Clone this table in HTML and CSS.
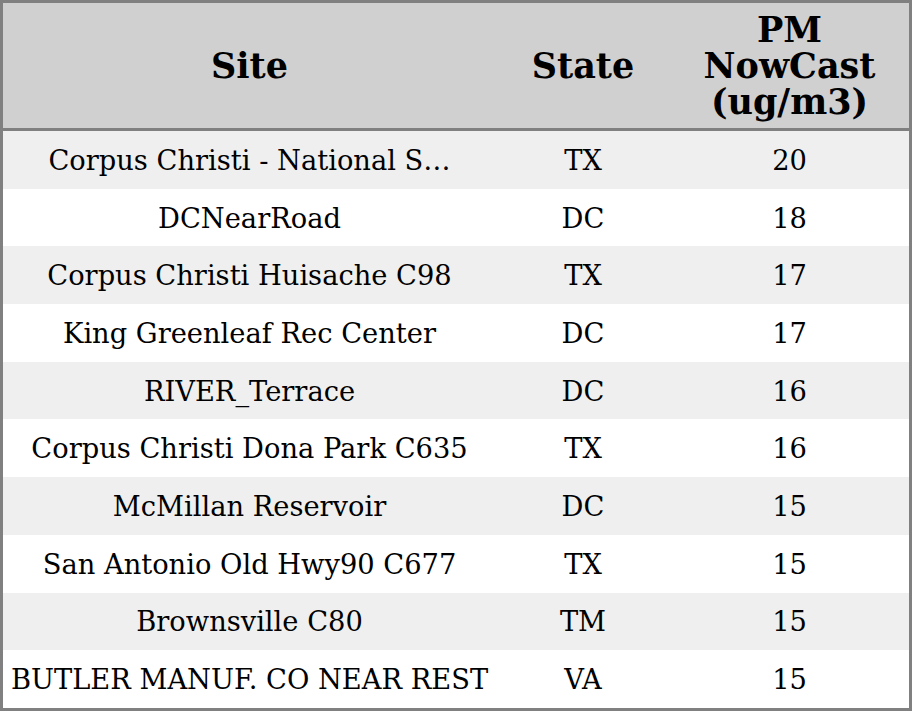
FILE: index.html
```html
<!DOCTYPE html>
<html>
<head>
<meta charset="utf-8">
<link rel="stylesheet" href="styles.css">
</head>
<body>
<table class="aq">
  <colgroup>
    <col class="c-site">
    <col class="c-state">
    <col class="c-pm">
  </colgroup>
  <thead>
    <tr>
      <th>Site</th>
      <th>State</th>
      <th>PM<br>NowCast<br>(ug/m3)</th>
    </tr>
  </thead>
  <tbody>
    <tr><td>Corpus Christi - National S…</td><td>TX</td><td>20</td></tr>
    <tr><td>DCNearRoad</td><td>DC</td><td>18</td></tr>
    <tr><td>Corpus Christi Huisache C98</td><td>TX</td><td>17</td></tr>
    <tr><td>King Greenleaf Rec Center</td><td>DC</td><td>17</td></tr>
    <tr><td>RIVER_Terrace</td><td>DC</td><td>16</td></tr>
    <tr><td>Corpus Christi Dona Park C635</td><td>TX</td><td>16</td></tr>
    <tr><td>McMillan Reservoir</td><td>DC</td><td>15</td></tr>
    <tr><td>San Antonio Old Hwy90 C677</td><td>TX</td><td>15</td></tr>
    <tr><td>Brownsville C80</td><td>TM</td><td>15</td></tr>
    <tr><td>BUTLER MANUF. CO NEAR REST</td><td>VA</td><td>15</td></tr>
  </tbody>
</table>
</body>
</html>
```
FILE: styles.css
```css
html, body {
  margin: 0;
  padding: 0;
  background: #ffffff;
}

.aq {
  width: 912px;
  height: 711px;
  border-collapse: separate;
  border-spacing: 0;
  border: 3px solid #808080;
  box-sizing: border-box;
  table-layout: fixed;
  font-family: "DejaVu Serif", serif;
  color: #000;
}

.c-site { width: 493px; }
.c-state { width: 174px; }
.c-pm { width: 239px; }

.aq th {
  background: #d0d0d0;
  height: 125px;
  padding: 0 2px;
  border-bottom: 3px solid #808080;
  font-size: 35px;
  font-weight: bold;
  line-height: 36px;
  text-align: center;
  vertical-align: middle;
  box-sizing: content-box;
}

.aq td {
  height: 57.7px;
  padding: 2px 2px 0;
  font-size: 27.3px;
  line-height: 32px;
  text-align: center;
  vertical-align: middle;
  white-space: nowrap;
  overflow: hidden;
  box-sizing: border-box;
}

.aq tbody tr:nth-child(odd) td {
  background: #efefef;
}

.aq tbody tr:nth-child(even) td {
  background: #ffffff;
}
```
